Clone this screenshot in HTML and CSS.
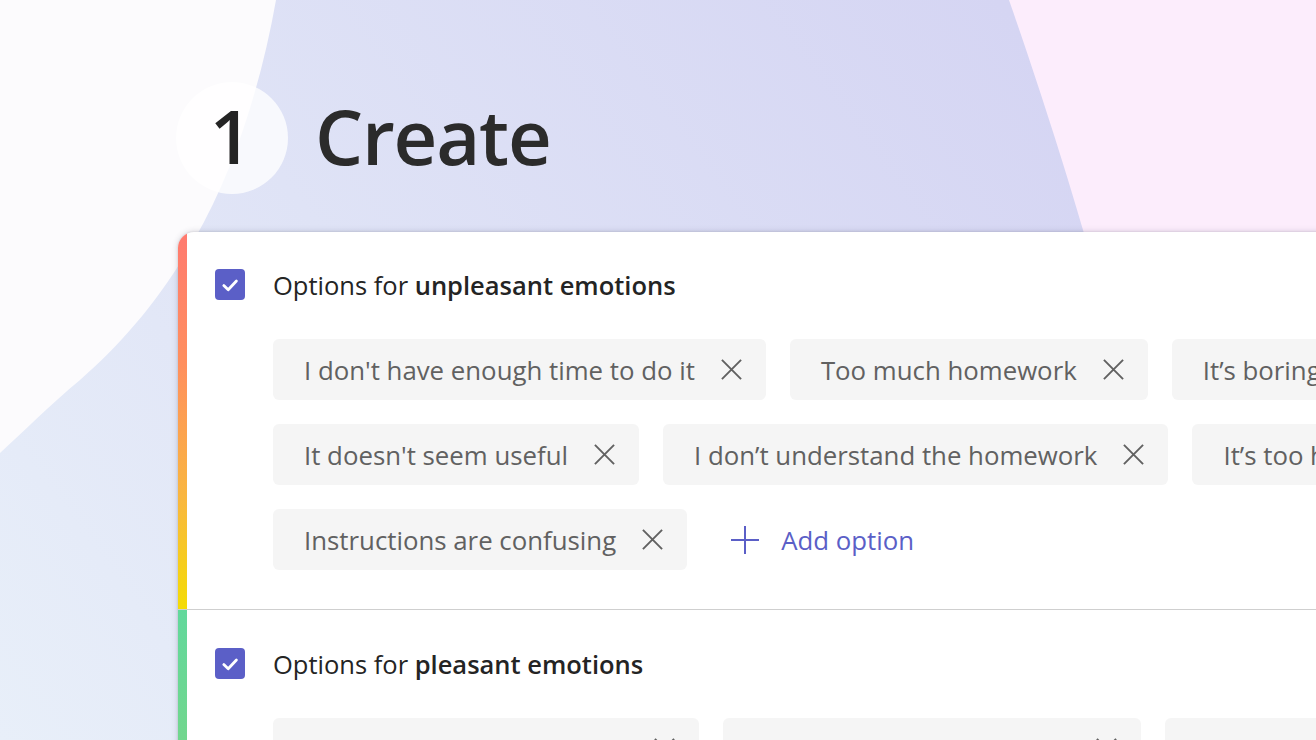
FILE: index.html
```html
<!DOCTYPE html>
<html lang="en">
<head>
<meta charset="utf-8">
<title>Create</title>
<link rel="stylesheet" href="styles.css">
</head>
<body>
<div class="page">
  <svg class="backdrop" viewBox="0 0 1316 740" preserveAspectRatio="none" aria-hidden="true">
    <defs>
      <linearGradient id="lav" x1="0" y1="740" x2="1000" y2="0" gradientUnits="userSpaceOnUse">
        <stop offset="0" stop-color="#e8eff9"/>
        <stop offset="0.45" stop-color="#dfe3f6"/>
        <stop offset="1" stop-color="#d5d5f3"/>
      </linearGradient>
    </defs>
    <rect x="0" y="0" width="1316" height="740" fill="#fcfbfd"/>
    <path d="M1009,0 L1316,0 L1316,740 L1200,740 Z" fill="#fcedfc"/>
    <path d="M276,0 L1009,0 C1030,60 1060,150 1086,240 L1200,740 L0,740 L0,453 C25,430 50,405 80,380 C120,345 160,300 194,240 C235,170 262,80 276,0 Z" fill="url(#lav)"/>
  </svg>

  <header class="title">
    <div class="step">1</div>
    <h1 class="title-text">Create</h1>
  </header>

  <main class="card">
    <section class="group">
      <div class="bar bar-unpleasant"></div>
      <div class="group-body">
        <div class="group-head">
          <span class="check">
            <svg viewBox="0 0 30 30" width="30" height="30"><path d="M8.8 15.6 L13.2 19.8 L21.4 11" fill="none" stroke="#fff" stroke-width="2.8" stroke-linecap="round" stroke-linejoin="round"/></svg>
          </span>
          <h2 class="group-title">Options for <b>unpleasant emotions</b></h2>
        </div>
        <div class="chips">
          <div class="chip-row">
            <div class="chip"><span>I don't have enough time to do it</span><svg class="x" viewBox="0 0 24 24"><path d="M2 2 L22 22 M22 2 L2 22"/></svg></div>
            <div class="chip"><span>Too much homework</span><svg class="x" viewBox="0 0 24 24"><path d="M2 2 L22 22 M22 2 L2 22"/></svg></div>
            <div class="chip"><span>It’s boring</span><svg class="x" viewBox="0 0 24 24"><path d="M2 2 L22 22 M22 2 L2 22"/></svg></div>
          </div>
          <div class="chip-row">
            <div class="chip"><span>It doesn't seem useful</span><svg class="x" viewBox="0 0 24 24"><path d="M2 2 L22 22 M22 2 L2 22"/></svg></div>
            <div class="chip"><span>I don’t understand the homework</span><svg class="x" viewBox="0 0 24 24"><path d="M2 2 L22 22 M22 2 L2 22"/></svg></div>
            <div class="chip"><span>It’s too hard</span><svg class="x" viewBox="0 0 24 24"><path d="M2 2 L22 22 M22 2 L2 22"/></svg></div>
          </div>
          <div class="chip-row">
            <div class="chip"><span>Instructions are confusing</span><svg class="x" viewBox="0 0 24 24"><path d="M2 2 L22 22 M22 2 L2 22"/></svg></div>
            <button class="add"><svg class="plus" viewBox="0 0 30 30"><path d="M15 1 V29 M1 15 H29"/></svg><span>Add option</span></button>
          </div>
        </div>
      </div>
    </section>

    <section class="group group-divided">
      <div class="bar bar-pleasant"></div>
      <div class="group-body">
        <div class="group-head">
          <span class="check">
            <svg viewBox="0 0 30 30" width="30" height="30"><path d="M8.8 15.6 L13.2 19.8 L21.4 11" fill="none" stroke="#fff" stroke-width="2.8" stroke-linecap="round" stroke-linejoin="round"/></svg>
          </span>
          <h2 class="group-title">Options for <b>pleasant emotions</b></h2>
        </div>
        <div class="chips">
          <div class="chip-row">
            <div class="chip"><span>I know how to do this one (</span><svg class="x" viewBox="0 0 24 24"><path d="M2 2 L22 22 M22 2 L2 22"/></svg></div>
            <div class="chip"><span>The topics are fun for me (</span><svg class="x" viewBox="0 0 24 24"><path d="M2 2 L22 22 M22 2 L2 22"/></svg></div>
            <div class="chip"><span>I like learning</span><svg class="x" viewBox="0 0 24 24"><path d="M2 2 L22 22 M22 2 L2 22"/></svg></div>
          </div>
        </div>
      </div>
    </section>
  </main>
</div>
</body>
</html>
```

FILE: styles.css
```css
* { box-sizing: border-box; }

html, body {
  margin: 0;
  padding: 0;
  width: 1316px;
  height: 740px;
  overflow: hidden;
}

body {
  font-family: "Open Sans", "Noto Sans", sans-serif;
  color: #242424;
  background: #fcfbfd;
}

.page {
  position: relative;
  width: 1316px;
  height: 740px;
  overflow: hidden;
  padding-top: 82px;
}

.backdrop {
  position: absolute;
  left: 0;
  top: 0;
  width: 1316px;
  height: 740px;
  z-index: 0;
}

.title {
  position: relative;
  z-index: 1;
  display: flex;
  align-items: center;
  gap: 27px;
  margin-left: 176px;
  height: 112px;
}

.step {
  width: 112px;
  height: 112px;
  border-radius: 50%;
  background: rgba(255, 255, 255, 0.78);
  display: flex;
  align-items: center;
  justify-content: center;
  font-size: 74px;
  font-weight: 600;
  line-height: 1;
  color: #242424;
  padding-bottom: 4px;
  padding-right: 2px;
}

.title-text {
  margin: 0;
  font-size: 76px;
  font-weight: 600;
  letter-spacing: -1.2px;
  line-height: 1;
  color: #2b2b2b;
  padding-bottom: 4px;
}

.card {
  position: relative;
  z-index: 1;
  margin-top: 38px;
  margin-left: 178px;
  width: 1300px;
  background: #fff;
  border-radius: 16px 0 0 0;
  overflow: hidden;
  box-shadow: 0 0 6px rgba(60, 60, 80, 0.22), 0 0 2px rgba(60, 60, 80, 0.18);
}

.group {
  display: flex;
}

.group-divided {
  border-top: 1px solid #cfcfcf;
}

.group-divided .group-body {
  padding-top: 38px;
}

.bar {
  flex: 0 0 9px;
}

.bar-unpleasant {
  background: linear-gradient(180deg, #ff7a70 0%, #ff8f5e 35%, #f9b640 70%, #f4dc06 100%);
}

.bar-pleasant {
  background: linear-gradient(180deg, #62d89c 0%, #7bd585 100%);
}

.group-body {
  flex: 1;
  padding: 37px 0 39px 28px;
}

.group-head {
  display: flex;
  align-items: center;
  gap: 28px;
  height: 31px;
}

.check {
  width: 30px;
  height: 31px;
  border-radius: 4px;
  background: #5b5fc7;
  display: flex;
  align-items: center;
  justify-content: center;
}

.group-title {
  margin: 0;
  font-size: 25.5px;
  font-weight: 400;
  color: #242424;
  white-space: nowrap;
}

.group-title b {
  font-weight: 600;
}

.chips {
  margin-top: 39px;
  margin-left: 58px;
  display: flex;
  flex-direction: column;
  gap: 24px;
}

.chip-row {
  display: flex;
  gap: 24px;
  flex-wrap: nowrap;
}

.chip {
  flex: 0 0 auto;
  height: 61px;
  display: flex;
  align-items: center;
  gap: 25px;
  padding: 0 23px 0 31px;
  background: #f5f5f5;
  border-radius: 6px;
  font-size: 25.8px;
  color: #616161;
  white-space: nowrap;
}

.x {
  width: 23px;
  height: 23px;
  flex: 0 0 23px;
  fill: none;
  stroke: #616161;
  stroke-width: 2;
}

.add {
  display: flex;
  align-items: center;
  gap: 21px;
  height: 61px;
  padding: 0 0 0 19px;
  border: 0;
  background: transparent;
  font-family: inherit;
  font-size: 25.8px;
  color: #5b5fc7;
  cursor: pointer;
}

.plus {
  width: 30px;
  height: 30px;
  fill: none;
  stroke: #5b5fc7;
  stroke-width: 2;
}
```
